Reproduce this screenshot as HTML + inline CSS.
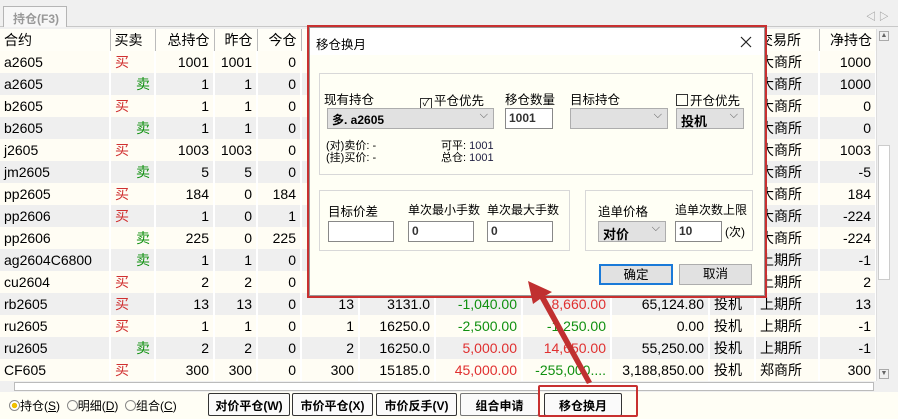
<!DOCTYPE html>
<html><head><meta charset="utf-8"><style>
*{box-sizing:border-box;margin:0;padding:0}
body{width:898px;height:419px;overflow:hidden;background:#f0f0f0;font-family:"Liberation Sans","Noto Sans CJK SC",sans-serif;font-size:13px;color:#000;position:relative}
.abs{position:absolute}
.tabbar{left:0;top:0;width:898px;height:27px;background:#f0f0f0;border-bottom:1px solid #c8c8c8}
.tab{left:3px;top:6px;width:64px;height:21px;background:#f7f7f7;border:1px solid #b5b5b5;border-bottom:none;color:#999;font-weight:bold;font-size:12px;padding:3px 0 0 9px}
table{border-collapse:collapse;position:absolute;left:0;top:29px;table-layout:fixed}
td{height:22px;padding:0 4px;white-space:nowrap;overflow:hidden;border-right:2px solid #fff;font-size:14px}
tr.h td{height:22px;background:#fffef7;border-right:none;font-size:14px}
tr.o td{background:#fffdf4}
tr.e td{background:#efefef}
.r{text-align:right}
.b{color:#d03030}.s{color:#109010}
.red{color:#e03030}.grn{color:#109010}
.sep{border-left:1px solid #bbb}
.dlg{left:309px;top:27px;width:456px;height:269px;background:#fffff5;border:1px solid #999}
.red-o{border:2px solid #c83030}
.grp{position:absolute;border:1px solid #d8d8d8}
.lbl{position:absolute;font-size:12.5px;white-space:nowrap}
.inp{position:absolute;background:#fff;border:1px solid #888;height:21px;font-size:12px;font-weight:bold;padding:2px 3px;color:#333}
.sel{position:absolute;background:#e1e1e1;border:1px solid #adadad;height:21px;font-size:12px;font-weight:bold;padding:2px 4px}
.sel:after{content:"⌵";position:absolute;right:5px;top:0;font-weight:normal;color:#555;font-size:11px}
.btn{position:absolute;background:#e1e1e1;border:1px solid #adadad;height:21px;text-align:center;font-size:12.5px;line-height:18px}
.bb{position:absolute;top:393px;height:23px;border:1px solid #333;background:#fafafa;font-weight:bold;font-size:12px;text-align:center;padding-top:3px;border-radius:2px}
</style></head><body>
<div class="abs tabbar"></div>
<div class="abs tab">持仓(F3)</div>
<div class="abs" style="left:866px;top:8px;font-size:10px;color:#888">◁ ▷</div>
<table>
<colgroup><col style="width:110px"><col style="width:45px"><col style="width:59px"><col style="width:43px"><col style="width:44px"><col style="width:58px"><col style="width:76px"><col style="width:87px"><col style="width:89px"><col style="width:98px"><col style="width:46px"><col style="width:64px"><col style="width:57px"></colgroup>
<tr class="h"><td>合约</td><td class="sep">买卖</td><td class="sep r">总持仓</td><td class="sep r">昨仓</td><td class="sep r">今仓</td><td class="sep r">可用</td><td class="sep r">开仓均价</td><td class="sep r">逐笔浮盈</td><td class="sep r">盯市浮盈</td><td class="sep r">保证金</td><td class="sep">投保</td><td>交易所</td><td class="sep r">净持仓</td></tr>
<tr class="o"><td>a2605</td><td class="b">买</td><td class="r">1001</td><td class="r">1001</td><td class="r">0</td><td class="r">1001</td><td class="r">3000.0</td><td class="r red">0.00</td><td class="r red">0.00</td><td class="r">0.00</td><td>投机</td><td>大商所</td><td class="r">1000</td></tr>
<tr class="e"><td>a2605</td><td class="r s">卖</td><td class="r">1</td><td class="r">1</td><td class="r">0</td><td class="r">1</td><td class="r">3000.0</td><td class="r">0.00</td><td class="r">0.00</td><td class="r">0.00</td><td>投机</td><td>大商所</td><td class="r">1000</td></tr>
<tr class="o"><td>b2605</td><td class="b">买</td><td class="r">1</td><td class="r">1</td><td class="r">0</td><td class="r">1</td><td class="r">3000.0</td><td class="r">0.00</td><td class="r">0.00</td><td class="r">0.00</td><td>投机</td><td>大商所</td><td class="r">0</td></tr>
<tr class="e"><td>b2605</td><td class="r s">卖</td><td class="r">1</td><td class="r">1</td><td class="r">0</td><td class="r">1</td><td class="r">3000.0</td><td class="r">0.00</td><td class="r">0.00</td><td class="r">0.00</td><td>投机</td><td>大商所</td><td class="r">0</td></tr>
<tr class="o"><td>j2605</td><td class="b">买</td><td class="r">1003</td><td class="r">1003</td><td class="r">0</td><td class="r">1003</td><td class="r">1500.0</td><td class="r">0.00</td><td class="r">0.00</td><td class="r">0.00</td><td>投机</td><td>大商所</td><td class="r">1003</td></tr>
<tr class="e"><td>jm2605</td><td class="r s">卖</td><td class="r">5</td><td class="r">5</td><td class="r">0</td><td class="r">5</td><td class="r">1000.0</td><td class="r">0.00</td><td class="r">0.00</td><td class="r">0.00</td><td>投机</td><td>大商所</td><td class="r">-5</td></tr>
<tr class="o"><td>pp2605</td><td class="b">买</td><td class="r">184</td><td class="r">0</td><td class="r">184</td><td class="r">184</td><td class="r">7000.0</td><td class="r">0.00</td><td class="r">0.00</td><td class="r">0.00</td><td>投机</td><td>大商所</td><td class="r">184</td></tr>
<tr class="e"><td>pp2606</td><td class="b">买</td><td class="r">1</td><td class="r">0</td><td class="r">1</td><td class="r">1</td><td class="r">7000.0</td><td class="r">0.00</td><td class="r">0.00</td><td class="r">0.00</td><td>投机</td><td>大商所</td><td class="r">-224</td></tr>
<tr class="o"><td>pp2606</td><td class="r s">卖</td><td class="r">225</td><td class="r">0</td><td class="r">225</td><td class="r">225</td><td class="r">7000.0</td><td class="r">0.00</td><td class="r">0.00</td><td class="r">0.00</td><td>投机</td><td>大商所</td><td class="r">-224</td></tr>
<tr class="e"><td>ag2604C6800</td><td class="r s">卖</td><td class="r">1</td><td class="r">1</td><td class="r">0</td><td class="r">1</td><td class="r">100.0</td><td class="r">0.00</td><td class="r">0.00</td><td class="r">0.00</td><td>投机</td><td>上期所</td><td class="r">-1</td></tr>
<tr class="o"><td>cu2604</td><td class="b">买</td><td class="r">2</td><td class="r">2</td><td class="r">0</td><td class="r">2</td><td class="r">80000.0</td><td class="r">0.00</td><td class="r">0.00</td><td class="r">0.00</td><td>投机</td><td>上期所</td><td class="r">2</td></tr>
<tr class="e"><td>rb2605</td><td class="b">买</td><td class="r">13</td><td class="r">13</td><td class="r">0</td><td class="r">13</td><td class="r">3131.0</td><td class="r grn">-1,040.00</td><td class="r red">8,660.00</td><td class="r">65,124.80</td><td>投机</td><td>上期所</td><td class="r">13</td></tr>
<tr class="o"><td>ru2605</td><td class="b">买</td><td class="r">1</td><td class="r">1</td><td class="r">0</td><td class="r">1</td><td class="r">16250.0</td><td class="r grn">-2,500.00</td><td class="r grn">-1,250.00</td><td class="r">0.00</td><td>投机</td><td>上期所</td><td class="r">-1</td></tr>
<tr class="e"><td>ru2605</td><td class="r s">卖</td><td class="r">2</td><td class="r">2</td><td class="r">0</td><td class="r">2</td><td class="r">16250.0</td><td class="r red">5,000.00</td><td class="r red">14,650.00</td><td class="r">55,250.00</td><td>投机</td><td>上期所</td><td class="r">-1</td></tr>
<tr class="o"><td>CF605</td><td class="b">买</td><td class="r">300</td><td class="r">300</td><td class="r">0</td><td class="r">300</td><td class="r">15185.0</td><td class="r red">45,000.00</td><td class="r grn">-255,000....</td><td class="r">3,188,850.00</td><td>投机</td><td>郑商所</td><td class="r">300</td></tr>
</table>
<div class="abs" style="left:876px;top:29px;width:16px;height:352px;background:#f0f0f0;border-left:1px solid #ddd"></div>
<div class="abs" style="left:878px;top:145px;width:12px;height:135px;background:#fff;border:1px solid #ccc"></div>
<div class="abs" style="left:879px;top:31px;width:10px;height:10px;border:1px solid #aaa;font-size:7px;text-align:center;color:#666">▲</div>
<div class="abs" style="left:879px;top:369px;width:10px;height:10px;border:1px solid #aaa;font-size:7px;text-align:center;color:#666">▼</div>
<div class="abs" style="left:0;top:381px;width:876px;height:11px;background:#f0f0f0"></div>
<div class="abs" style="left:14px;top:382px;width:860px;height:9px;background:#fff;border:1px solid #bbb"></div>
<div class="abs" style="left:0;top:392px;width:898px;height:27px;background:#fffef5"></div>
<div class="abs" style="left:9px;top:397px;font-size:12px">
<span style="display:inline-block;width:11px;height:11px;border-radius:50%;border:1px solid #888;background:radial-gradient(#f0c000 40%,#fff 45%);vertical-align:-1px"></span>持仓(<u>S</u>) &nbsp;<span style="display:inline-block;width:11px;height:11px;border-radius:50%;border:1px solid #888;vertical-align:-1px"></span>明细(<u>D</u>) &nbsp;<span style="display:inline-block;width:11px;height:11px;border-radius:50%;border:1px solid #888;vertical-align:-1px"></span>组合(<u>C</u>)</div>
<div class="bb" style="left:208px;width:82px">对价平仓(W)</div>
<div class="bb" style="left:292px;width:81px">市价平仓(X)</div>
<div class="bb" style="left:376px;width:81px">市价反手(V)</div>
<div class="bb" style="left:460px;width:79px;border-color:#777">组合申请</div>
<div class="bb" style="left:544px;width:78px">移仓换月</div>
<div class="abs red-o" style="left:538px;top:385px;width:100px;height:32px;border-radius:2px"></div>
<div class="abs red-o" style="left:307px;top:25px;width:460px;height:273px"></div>
<div class="abs dlg">
 <div class="abs" style="left:0;top:0;width:454px;height:27px;background:#fff"></div>
 <div class="lbl" style="left:6px;top:6px">移仓换月</div>
 <svg class="abs" style="left:430px;top:8px" width="12" height="12"><path d="M1 1L11 11M11 1L1 11" stroke="#222" stroke-width="1.2"/></svg>
 <div class="grp" style="left:9px;top:45px;width:434px;height:102px"></div>
 <div class="lbl" style="left:14px;top:61px">现有持仓</div>
 <div class="lbl" style="left:110px;top:62px"><span style="display:inline-block;width:12px;height:12px;border:1px solid #333;font-size:10px;line-height:10px;text-align:center;vertical-align:-1px;margin-right:2px">✓</span>平仓优先</div>
 <div class="lbl" style="left:195px;top:61px">移仓数量</div>
 <div class="lbl" style="left:260px;top:61px">目标持仓</div>
 <div class="lbl" style="left:366px;top:62px"><span style="display:inline-block;width:12px;height:12px;border:1px solid #333;vertical-align:-1px;margin-right:2px"></span>开仓优先</div>
 <div class="sel" style="left:17px;top:80px;width:167px">多. a2605</div>
 <div class="inp" style="left:195px;top:80px;width:48px">1001</div>
 <div class="sel" style="left:260px;top:80px;width:98px"></div>
 <div class="sel" style="left:366px;top:80px;width:68px;font-size:13px">投机</div>
 <div class="lbl" style="left:16px;top:112px;font-size:11px;line-height:12px">(对)卖价: -<br>(挂)买价: -</div>
 <div class="lbl" style="left:131px;top:112px;font-size:11px;line-height:12px">可平: <span style="color:#224">1001</span><br>总仓: <span style="color:#224">1001</span></div>
 <div class="grp" style="left:9px;top:162px;width:251px;height:61px"></div>
 <div class="grp" style="left:275px;top:162px;width:168px;height:61px"></div>
 <div class="lbl" style="left:18px;top:173px">目标价差</div>
 <div class="lbl" style="left:98px;top:173px;font-size:12px">单次最小手数</div>
 <div class="lbl" style="left:177px;top:173px;font-size:12px">单次最大手数</div>
 <div class="lbl" style="left:288px;top:173px">追单价格</div>
 <div class="lbl" style="left:365px;top:173px;font-size:12px">追单次数上限</div>
 <div class="inp" style="left:18px;top:193px;width:66px"></div>
 <div class="inp" style="left:98px;top:193px;width:66px">0</div>
 <div class="inp" style="left:177px;top:193px;width:66px">0</div>
 <div class="sel" style="left:288px;top:193px;width:68px;font-size:13px">对价</div>
 <div class="inp" style="left:365px;top:193px;width:47px">10</div>
 <div class="lbl" style="left:415px;top:195px;font-size:12px">(次)</div>
 <div class="btn" style="left:289px;top:236px;width:74px;border:2px solid #1a7ad8">确定</div>
 <div class="btn" style="left:369px;top:236px;width:73px">取消</div>
</div>
<svg class="abs" style="left:0;top:0" width="898" height="419"><polygon points="528,281 552,292 545,296 592,382 587,384 540,299 533,304" fill="#c03030"/></svg>
</body></html>
